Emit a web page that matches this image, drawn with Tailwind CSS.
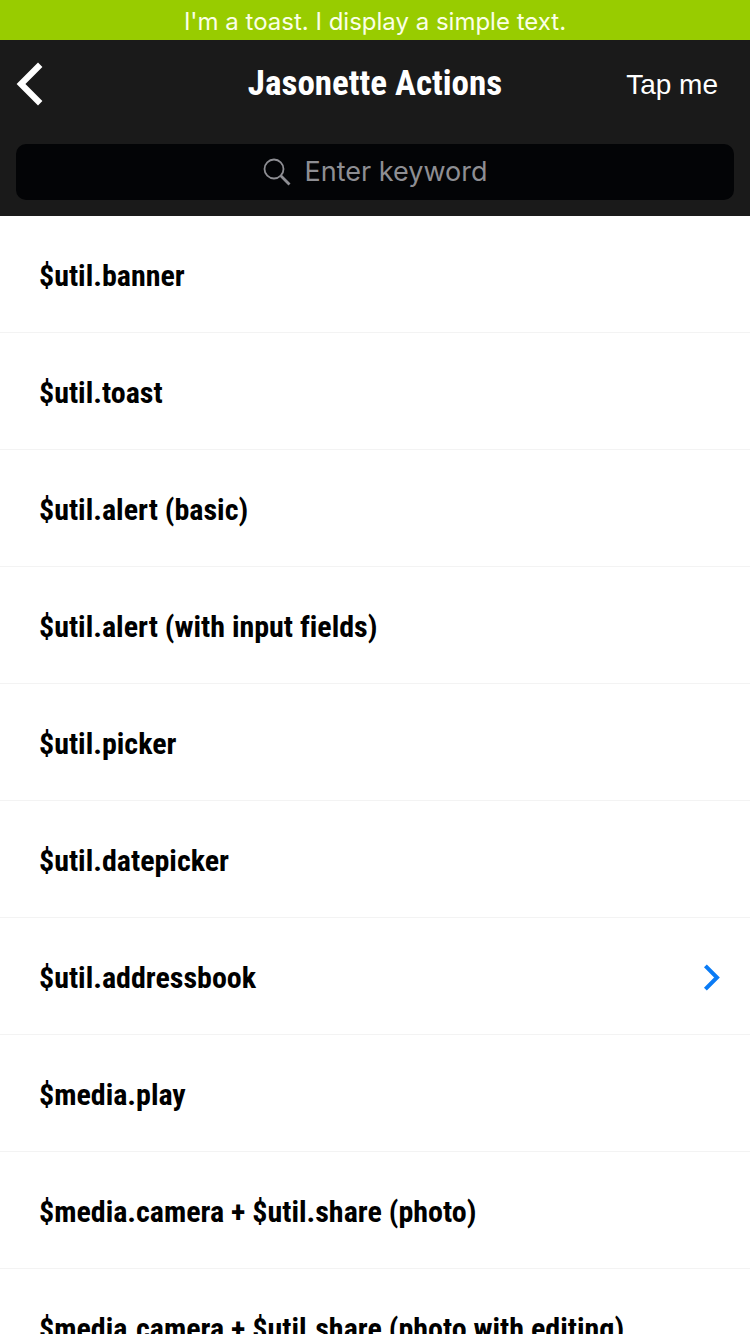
<!DOCTYPE html>
<html lang="en">
<head>
<meta charset="utf-8">
<meta name="viewport" content="width=device-width, initial-scale=1">
<title>Jasonette Actions</title>
<script src="https://cdn.jsdelivr.net/npm/@tailwindcss/browser@4"></script>
</head>
<body class="flex h-screen flex-col overflow-hidden bg-white font-['Inter',sans-serif] text-black">
  <div role="status" class="flex h-10 shrink-0 items-center justify-center bg-[#98cc00] pt-1 text-2xl text-[#fbffe6]">I'm a toast. I display a simple text.</div>

  <header class="shrink-0 bg-[#1a1a1a] text-white">
    <nav class="grid h-22 grid-cols-[1fr_auto_1fr] items-center">
      <button type="button" aria-label="Back" class="ml-4 justify-self-start">
        <svg class="h-11 w-7" viewBox="0 0 28 44" fill="none" stroke="currentColor" stroke-width="6.2" stroke-linejoin="miter"><path d="M24.2 2.8L5 22L24.2 41.2"/></svg>
      </button>
      <h1 class="font-['Roboto_Condensed','Liberation_Sans_Narrow',sans-serif] text-[35px] font-bold">Jasonette Actions</h1>
      <button type="button" class="mr-8 justify-self-end pt-0.5 font-['Liberation_Sans',sans-serif] text-[28px]">Tap me</button>
    </nav>
    <form role="search" class="p-4">
      <label class="flex h-14 items-center justify-center gap-3.5 rounded-[10px] bg-[#030406] text-[#8e8e93]">
        <svg class="size-7" viewBox="0 0 28 28" fill="none" stroke="currentColor" aria-hidden="true"><circle cx="11" cy="11" r="9.5" stroke-width="1.8"/><path d="M17.8 17.8L26.5 26.5" stroke-width="2.8"/></svg>
        <input type="search" aria-label="Search" placeholder="Enter keyword" class="field-sizing-content bg-transparent text-[27px] text-white outline-none placeholder:text-[#8e8e93]">
      </label>
    </form>
  </header>

  <main class="min-h-0 flex-1 overflow-y-auto [scrollbar-width:none]">
    <ul class="font-['Roboto_Condensed','Liberation_Sans_Narrow',sans-serif] text-3xl font-bold [font-variant-ligatures:none]">
      <li><button type="button" class="flex h-[117px] w-full items-center justify-between border-b border-[#f3f3f3] pt-[3px] pr-7 pl-[39px]">$util.banner</button></li>
      <li><button type="button" class="flex h-[117px] w-full items-center justify-between border-b border-[#f3f3f3] pt-[3px] pr-7 pl-[39px]">$util.toast</button></li>
      <li><button type="button" class="flex h-[117px] w-full items-center justify-between border-b border-[#f3f3f3] pt-[3px] pr-7 pl-[39px]">$util.alert (basic)</button></li>
      <li><button type="button" class="flex h-[117px] w-full items-center justify-between border-b border-[#f3f3f3] pt-[3px] pr-7 pl-[39px]">$util.alert (with input fields)</button></li>
      <li><button type="button" class="flex h-[117px] w-full items-center justify-between border-b border-[#f3f3f3] pt-[3px] pr-7 pl-[39px]">$util.picker</button></li>
      <li><button type="button" class="flex h-[117px] w-full items-center justify-between border-b border-[#f3f3f3] pt-[3px] pr-7 pl-[39px]">$util.datepicker</button></li>
      <li><a href="#addressbook" class="flex h-[117px] w-full items-center justify-between border-b border-[#f3f3f3] pt-[3px] pr-7 pl-[39px]">$util.addressbook
        <svg class="h-7 w-5" viewBox="0 0 20 28" fill="none" stroke="#0a7bf5" stroke-width="4" aria-hidden="true"><path d="M3.4 1.8L15 13.5L3.4 25.2"/></svg></a></li>
      <li><button type="button" class="flex h-[117px] w-full items-center justify-between border-b border-[#f3f3f3] pt-[3px] pr-7 pl-[39px]">$media.play</button></li>
      <li><button type="button" class="flex h-[117px] w-full items-center justify-between border-b border-[#f3f3f3] pt-[3px] pr-7 pl-[39px]">$media.camera + $util.share (photo)</button></li>
      <li><button type="button" class="flex h-[117px] w-full items-center justify-between border-b border-[#f3f3f3] pt-[3px] pr-7 pl-[39px]">$media.camera + $util.share (photo with editing)</button></li>
    </ul>
  </main>
</body>
</html>
